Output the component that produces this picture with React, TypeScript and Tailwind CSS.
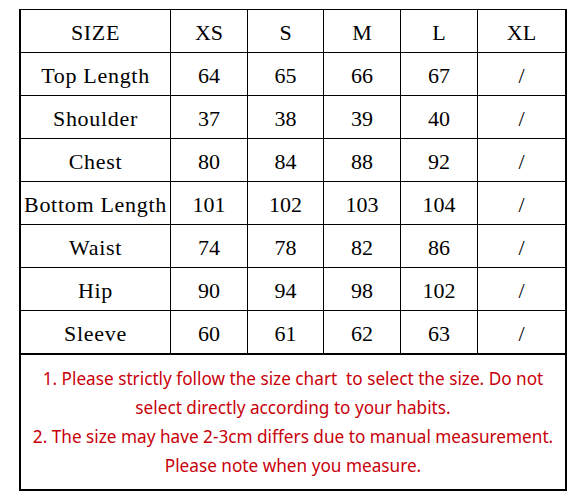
const headers = ["SIZE", "XS", "S", "M", "L", "XL"];

const rows: [string, ...string[]][] = [
  ["Top Length", "64", "65", "66", "67", "/"],
  ["Shoulder", "37", "38", "39", "40", "/"],
  ["Chest", "80", "84", "88", "92", "/"],
  ["Bottom Length", "101", "102", "103", "104", "/"],
  ["Waist", "74", "78", "82", "86", "/"],
  ["Hip", "90", "94", "98", "102", "/"],
  ["Sleeve", "60", "61", "62", "63", "/"],
];

const notes = [
  "1. Please strictly follow the size chart  to select the size. Do not",
  "select directly according to your habits.",
  "2. The size may have 2-3cm differs due to manual measurement.",
  "Please note when you measure.",
];

function Cell({ text, first }: { text: string; first?: boolean }) {
  return (
    <div
      className={
        first
          ? "flex items-center justify-center bg-white pt-[3px] text-[22px] tracking-[0.7px] text-black"
          : "flex items-center justify-center bg-white pt-[3px] text-[22px] text-black"
      }
    >
      {text}
    </div>
  );
}

export default function App() {
  return (
    <div className="min-h-[500px] w-[580px] bg-white pl-[19px] pt-[9px]">
      <div className="w-[548px] border-t border-r-2 border-b-2 border-l-2 border-black">
        <div
          className="grid grid-cols-[149px_76px_75px_76px_76px_1fr] auto-rows-[42px] gap-px bg-black"
          style={{ fontFamily: '"Liberation Serif", serif' }}
        >
          {headers.map((h, i) => (
            <Cell key={h} text={h} first={i === 0} />
          ))}
          {rows.map((r) =>
            r.map((c, i) => <Cell key={r[0] + i} text={c} first={i === 0} />)
          )}
        </div>
        <div
          className="flex h-[136px] flex-col items-center justify-center border-t-2 border-black text-[17.2px] leading-[29px] text-[#c8000a]"
          style={{ fontFamily: '"Noto Sans", "Open Sans", sans-serif' }}
        >
          {notes.map((n) => (
            <div key={n} className="whitespace-pre">
              {n}
            </div>
          ))}
        </div>
      </div>
    </div>
  );
}
